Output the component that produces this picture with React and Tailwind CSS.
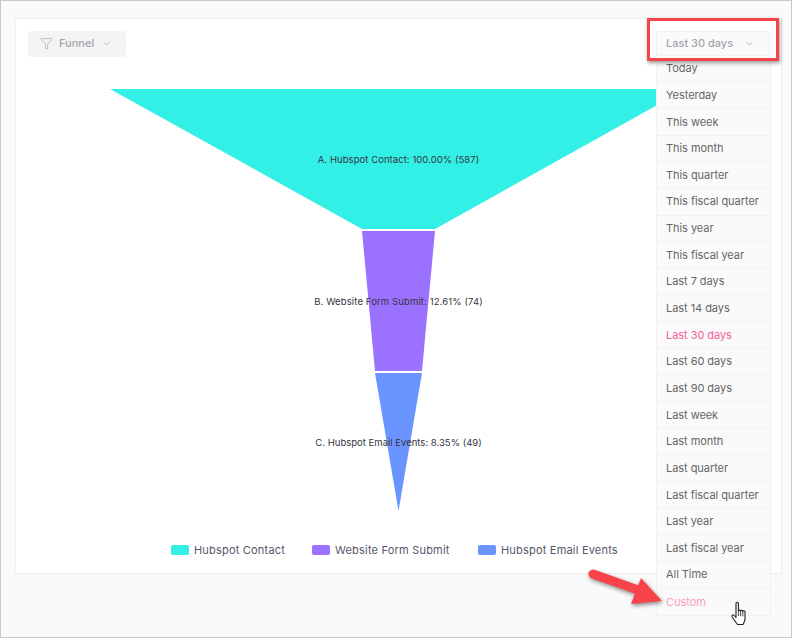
import React from "react";
import { Filter, ChevronDown } from "lucide-react";

const ranges = [
  "Today",
  "Yesterday",
  "This week",
  "This month",
  "This quarter",
  "This fiscal quarter",
  "This year",
  "This fiscal year",
  "Last 7 days",
  "Last 14 days",
  "Last 30 days",
  "Last 60 days",
  "Last 90 days",
  "Last week",
  "Last month",
  "Last quarter",
  "Last fiscal quarter",
  "Last year",
  "Last fiscal year",
  "All Time",
  "Custom",
];

const legend = [
  { label: "Hubspot Contact", swatch: "bg-[#33f0e6]", width: "w-[91px]" },
  { label: "Website Form Submit", swatch: "bg-[#9b72ff]", width: "w-[116px]" },
  { label: "Hubspot Email Events", swatch: "bg-[#6a94ff]", width: "w-[116px]" },
];

const rangeColor = (name) => {
  if (name === "Last 30 days") return "text-[#f0609f]";
  if (name === "Custom") return "text-[#fb9cc6]";
  return "text-[#666666]";
};

// svg origin is page (16, 57)
const Funnel = () => (
  <svg className="block w-full h-[473px]" viewBox="16 57 765 473">
    <polygon points="110,89 686,89 435,229 362,229" fill="#33f0e6" />
    <polygon points="362,231 435,231 422,371 375,371" fill="#9b72ff" />
    <polygon points="375,373 422,373 398.5,511" fill="#6a94ff" />
    <g fontSize="9.5" fill="#33333f" textAnchor="middle" fontFamily="Inter, sans-serif">
      <text x="398.5" y="163" letterSpacing="0.06">A. Hubspot Contact: 100.00% (587)</text>
      <text x="398.5" y="305" letterSpacing="0.12">B. Website Form Submit: 12.61% (74)</text>
      <text x="398.5" y="446" letterSpacing="0.01">C. Hubspot Email Events: 8.35% (49)</text>
    </g>
  </svg>
);

const DateMenu = () => (
  <div className="relative">
    <button className="flex h-[26px] w-[114px] items-center justify-between rounded-[3px] border border-[#eeeeee] bg-[#fafafa] pb-[1px] pl-[9px] pr-[14px] text-[11px] font-medium text-[#a3a3ab]">
      Last 30 days
      <ChevronDown size={11} strokeWidth={1.5} />
    </button>
    <ul className="absolute left-0 top-[23.7px] w-[115px] border border-[#f2f2f2] bg-[#fafafa] text-[11px] tracking-[-0.05px]">
      {ranges.map((name) => (
        <li
          key={name}
          className={`flex h-[26.65px] items-center border-b border-[#f2f2f2] pl-[9px] last:border-b-0 ${rangeColor(name)}`}
        >
          {name}
        </li>
      ))}
    </ul>
  </div>
);

export default function App() {
  return (
    <div className="relative h-[638px] w-[792px] overflow-hidden border border-[#cfc6c6] bg-[#fafafa] font-['Inter',sans-serif]">
      <div className="ml-[14px] mt-[17px] h-[556px] w-[767px] rounded-[2px] border border-[#eeeeee] bg-white">
        <div className="flex items-start justify-between pl-[12px] pr-[11px] pt-[12px]">
          <button className="flex h-[26px] w-[98px] items-center gap-[6px] rounded-[3px] bg-[#f4f4f4] pb-[1px] pl-[12px] text-[11px] font-medium text-[#a3a3ab]">
            <Filter size={13} strokeWidth={1.25} />
            Funnel
            <ChevronDown size={11} strokeWidth={1.5} className="ml-[1px]" />
          </button>
          <DateMenu />
        </div>
        <Funnel />
        <div className="flex pl-[155px] pt-[12px] text-[11px] tracking-[0.2px] text-[#55556a]">
          {legend.map((item) => (
            <div key={item.label} className="mr-[27px] flex items-center gap-[5px]">
              <span className={`h-[10px] w-[18px] rounded-[2px] ${item.swatch}`} />
              <span className={`whitespace-nowrap ${item.width}`}>{item.label}</span>
            </div>
          ))}
        </div>
      </div>

      {/* annotation: red box round the date picker */}
      <div className="absolute left-[646px] top-[17px] h-[43px] w-[132px] border-[3px] border-[#f4444a] shadow-[1px_2px_4px_rgba(0,0,0,0.4)]" />

      {/* annotation: arrow pointing at Custom */}
      <svg className="absolute left-[580px] top-[560px] h-[60px] w-[90px] drop-shadow-[1px_2px_2px_rgba(0,0,0,0.45)]" viewBox="580 560 90 60">
        <line x1="592" y1="573" x2="640" y2="590" stroke="#f9434a" strokeWidth="9" strokeLinecap="round" />
        <polygon points="640,577 661,600 630,603" fill="#f9434a" />
      </svg>

      {/* mouse cursor */}
      <svg className="absolute left-[729px] top-[600px] h-[26px] w-[20px]" viewBox="0 0 20 26">
        <path
          d="M6 2.5c0-1.6 2.4-1.6 2.4 0V10c0-1.2 2.2-1.2 2.2 0.2 0-1.2 2.2-1.2 2.2 0.3 0-1 2.2-1 2.2 0.4v7c0 2.500-1.300 4-2 5.600H7.500C6 21.500 4.500 19.500 2.200 16c-1-1.600 0.800-2.800 2-1.500L6 16.500Z"
          fill="#ffffff"
          stroke="#222222"
          strokeWidth="1.1"
          strokeLinejoin="round"
        />
        <path d="M8.400 10v5M10.600 10.200v5M12.800 10.500v5" stroke="#222222" strokeWidth="0.8" />
      </svg>
    </div>
  );
}
